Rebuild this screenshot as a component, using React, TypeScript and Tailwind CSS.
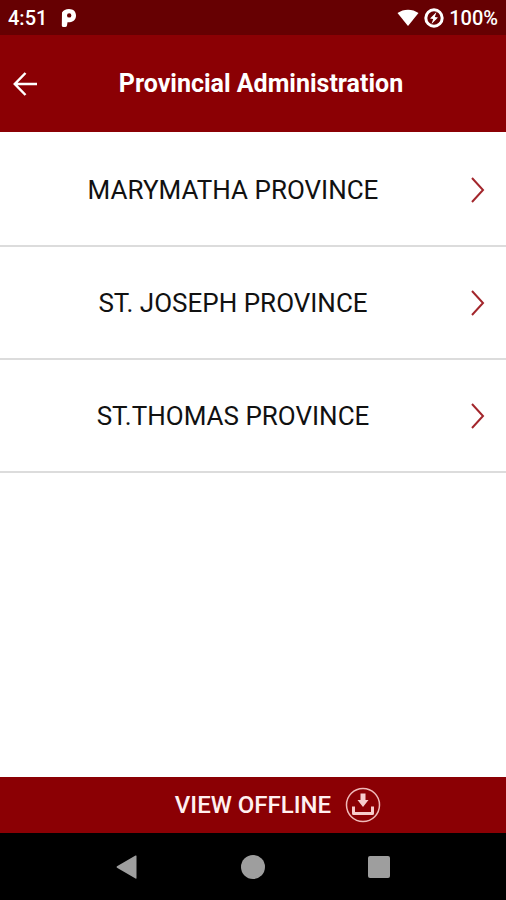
import { useState } from 'react';

type Province = {
  id: number;
  name: string;
};

const provinces: Province[] = [
  { id: 1, name: 'MARYMATHA PROVINCE' },
  { id: 2, name: 'ST. JOSEPH PROVINCE' },
  { id: 3, name: 'ST.THOMAS PROVINCE' },
];

function StatusBar() {
  return (
    <div className="flex h-[35px] items-center justify-between bg-[#660002] px-2 text-xl font-medium text-white">
      <div className="flex items-center gap-3.5">
        <span>4:51</span>
        <svg width="16" height="18" viewBox="0 0 16 18" aria-hidden="true">
          <path
            fill="white"
            fillRule="evenodd"
            d="M1 3.500 Q3 0 8 0 C12.500 0 15 2.800 15 6.600 C15 10.500 12.500 13.200 8.800 13.200 H6.500 L6 16.500 Q5.700 18 4 18 H2.500 Q0.800 18 0.800 16.500 Z M8.200 4.200 A2.200 2.200 0 1 0 8.200 8.600 A2.200 2.200 0 1 0 8.200 4.200 Z"
          />
        </svg>
      </div>
      <div className="flex items-center gap-1">
        <svg width="22" height="18" viewBox="0 0 22 18" aria-hidden="true">
          <path fill="white" d="M0.500 4 C6.500 -0.500 15.500 -0.500 21.500 4 L11 17 Z" />
        </svg>
        <svg width="20" height="20" viewBox="0 0 20 20" className="mx-px" aria-hidden="true">
          <circle cx="10" cy="10" r="8.200" fill="none" stroke="white" strokeWidth="3" />
          <path fill="white" d="M12.500 4 L6 10.500 L9.200 11 L7.500 16 L14 9.500 L10.800 9 Z" />
        </svg>
        <span>100%</span>
      </div>
    </div>
  );
}

function Header() {
  return (
    <header className="flex h-[97px] items-center bg-[#8b0004] pr-9 pl-3">
      <button type="button" aria-label="Back" className="p-px">
        <svg width="24" height="24" viewBox="0 0 24 24" fill="none" stroke="white" strokeWidth="2.500">
          <path d="M24 12 H2 M12.500 1 L1.800 12 L12.500 23" />
        </svg>
      </button>
      <h1 className="flex-1 pl-3.5 text-center text-[25px] leading-8 font-bold text-white">Provincial Administration</h1>
    </header>
  );
}

function ProvinceRow({ province }: { province: Province }) {
  return (
    <li className="border-b-2 border-[#dcdcdc]">
      <a href={`#province-${province.id}`} className="flex h-[111px] items-center pr-5">
        <span className="flex-1 text-center text-[26px] leading-8 text-[#111111]">{province.name}</span>
        <svg width="20" height="28" viewBox="0 0 20 28" fill="none" stroke="#a3262c" strokeWidth="2">
          <path d="M6 2 L17 14 L6 26" />
        </svg>
      </a>
    </li>
  );
}

function NavigationBar() {
  return (
    <nav className="grid h-[67px] grid-cols-3 items-center bg-black px-16">
      <button type="button" aria-label="Back" className="flex justify-center">
        <svg width="22" height="24" viewBox="0 0 22 24" fill="#9e9e9e">
          <path d="M20.500 1 V23 Q20.500 24 19.500 23.400 L1 12.700 Q0 12 1 11.300 L19.500 0.600 Q20.500 0 20.500 1 Z" />
        </svg>
      </button>
      <button type="button" aria-label="Home" className="flex justify-center">
        <span className="size-6 rounded-full bg-[#9e9e9e]" />
      </button>
      <button type="button" aria-label="Recent apps" className="flex justify-center">
        <span className="size-[22px] rounded-xs bg-[#9e9e9e]" />
      </button>
    </nav>
  );
}

export default function App() {
  const [offline, setOffline] = useState(false);

  return (
    <div className="flex min-h-screen flex-col bg-white font-[Roboto,'Liberation_Sans',sans-serif]">
      <StatusBar />
      <Header />

      {/* Province list */}
      <main className="flex-1 pt-0.5">
        <ul>
          {provinces.map((province) => (
            <ProvinceRow key={province.id} province={province} />
          ))}
        </ul>
      </main>

      {/* Offline download */}
      <button
        type="button"
        aria-pressed={offline}
        onClick={() => setOffline(!offline)}
        className="flex h-14 items-center justify-center gap-3.5 bg-[#8b0004] pl-[50px] text-2xl font-medium text-[#fff0f0]"
      >
        VIEW OFFLINE
        <svg width="36" height="36" viewBox="0 0 36 36" fill="none" aria-hidden="true">
          <circle cx="18" cy="18" r="16.500" stroke="#f0b9b9" strokeWidth="1.500" />
          <path fill="#f7cccc" d="M15.500 6.500 H20.500 V13 H23.500 L18 20 L12.500 13 H15.500 Z" />
          <path stroke="#f7cccc" strokeWidth="3" strokeLinejoin="round" d="M8.500 19.500 V26.500 H27.500 V19.500" />
        </svg>
      </button>

      <NavigationBar />
    </div>
  );
}
